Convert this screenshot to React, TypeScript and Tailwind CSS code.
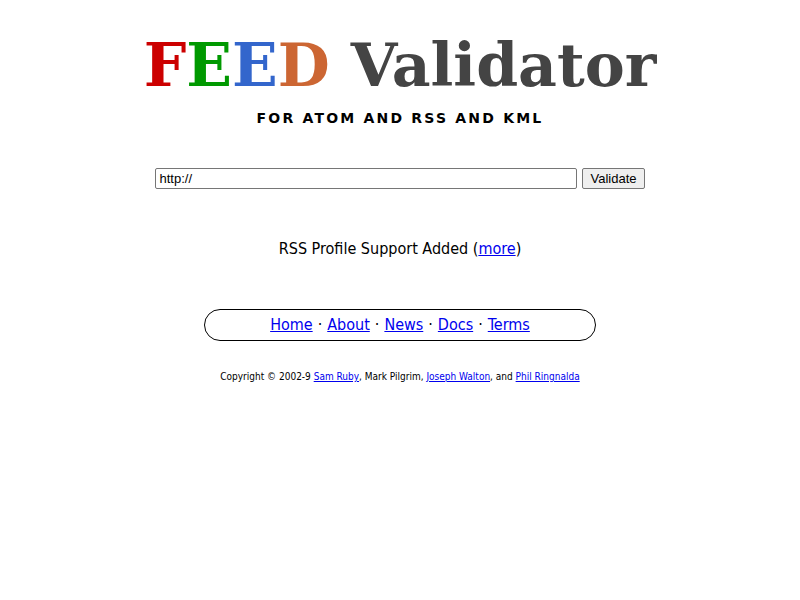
export default function App() {
  const body = { fontFamily: '"DejaVu Sans Condensed", "DejaVu Sans", Tahoma, sans-serif' }
  return (
    <div className="min-h-[600px] bg-white text-black flex flex-col items-center" style={body}>
      <h1
        className="mt-[27px] text-[60px] leading-[76px] font-bold"
        style={{ fontFamily: '"DejaVu Serif", Georgia, serif' }}
      >
        <span className="text-[#cc0000]">F</span>
        <span className="text-[#009900]">E</span>
        <span className="text-[#3366cc]">E</span>
        <span className="text-[#cc6633]">D</span>
        <span className="text-[#444444]"> Validator</span>
      </h1>
      <div
        className="mt-[5px] text-[14px] leading-[20px] font-bold tracking-[2.2px]"
        style={{ fontFamily: '"DejaVu Sans", sans-serif' }}
      >
        FOR ATOM AND RSS AND KML
      </div>
      <form className="mt-[40px] flex items-center gap-[5px]" onSubmit={e => e.preventDefault()}>
        <input
          defaultValue="http://"
          className="w-[422px] h-[21px] border border-[#767676] rounded-[2px] px-[3px] text-[13px] text-black"
          style={{ fontFamily: '"Liberation Sans", Arial, sans-serif' }}
        />
        <button
          className="h-[21px] px-[7px] border border-[#767676] rounded-[2px] bg-[#efefef] text-[13px] text-black"
          style={{ fontFamily: '"Liberation Sans", Arial, sans-serif' }}
        >
          Validate
        </button>
      </form>
      <p className="mt-[50px] text-[16px] leading-[20px]">
        RSS Profile Support Added (<a href="#" className="text-[#0000ee] underline">more</a>)
      </p>
      <div className="mt-[50px] w-[392px] h-[32px] border border-black rounded-full flex items-center justify-center text-[16px]">
        <a href="#" className="text-[#0000ee] underline">Home</a>
        <span className="mx-[5px]">·</span>
        <a href="#" className="text-[#0000ee] underline">About</a>
        <span className="mx-[5px]">·</span>
        <a href="#" className="text-[#0000ee] underline">News</a>
        <span className="mx-[5px]">·</span>
        <a href="#" className="text-[#0000ee] underline">Docs</a>
        <span className="mx-[5px]">·</span>
        <a href="#" className="text-[#0000ee] underline">Terms</a>
      </div>
      <p className="mt-[29px] text-[10px] leading-[14px]">
        Copyright © 2002-9 <a href="#" className="text-[#0000ee] underline">Sam Ruby</a>, Mark Pilgrim,{' '}
        <a href="#" className="text-[#0000ee] underline">Joseph Walton</a>, and{' '}
        <a href="#" className="text-[#0000ee] underline">Phil Ringnalda</a>
      </p>
    </div>
  )
}
